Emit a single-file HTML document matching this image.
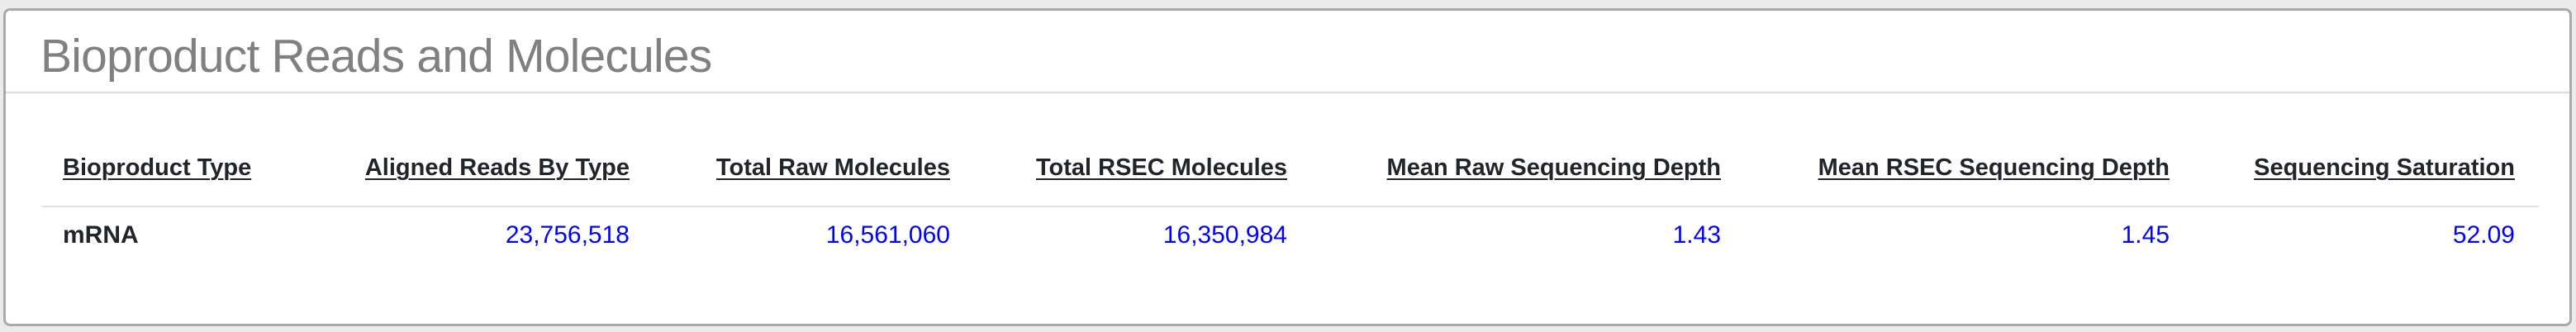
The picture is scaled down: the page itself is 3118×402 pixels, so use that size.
<!DOCTYPE html>
<html><head><style>
html,body{margin:0;padding:0;width:3118px;height:402px;background:#ebebeb;overflow:hidden;font-family:"Liberation Sans",Arial,sans-serif;}
.card{position:absolute;left:4px;top:10px;width:3103px;height:379px;background:#fff;border:3px solid #aaa;border-radius:8px;}
.title{position:absolute;left:42px;top:22px;font-size:57px;color:#808080;letter-spacing:-0.8px;white-space:nowrap;}
.hdiv{position:absolute;left:0;right:0;top:98px;height:2px;background:#dcdcdc;}
.h,.d{position:absolute;white-space:nowrap;font-size:29px;}
.h{top:174px;font-weight:bold;color:#212529;text-decoration:underline;text-decoration-thickness:2px;text-underline-offset:4px;}
.d{top:255px;color:#0000ff;font-size:30px;}
.rdiv{position:absolute;left:44px;width:3022px;top:236px;height:2px;background:#dee2e6;}
</style></head><body>
<div class="card">
<div class="title">Bioproduct Reads and Molecules</div>
<div class="hdiv"></div>
<div class="h" style="left:69px">Bioproduct Type</div>
<div class="h" style="right:2348px">Aligned Reads By Type</div>
<div class="h" style="right:1960px">Total Raw Molecules</div>
<div class="h" style="right:1552px">Total RSEC Molecules</div>
<div class="h" style="right:1027px">Mean Raw Sequencing Depth</div>
<div class="h" style="right:484px">Mean RSEC Sequencing Depth</div>
<div class="h" style="right:66px">Sequencing Saturation</div>
<div class="rdiv"></div>
<div class="d" style="left:69px;color:#212529;font-weight:bold">mRNA</div>
<div class="d" style="right:2348px">23,756,518</div>
<div class="d" style="right:1960px">16,561,060</div>
<div class="d" style="right:1552px">16,350,984</div>
<div class="d" style="right:1027px">1.43</div>
<div class="d" style="right:484px">1.45</div>
<div class="d" style="right:66px">52.09</div>
</div>
</body></html>
